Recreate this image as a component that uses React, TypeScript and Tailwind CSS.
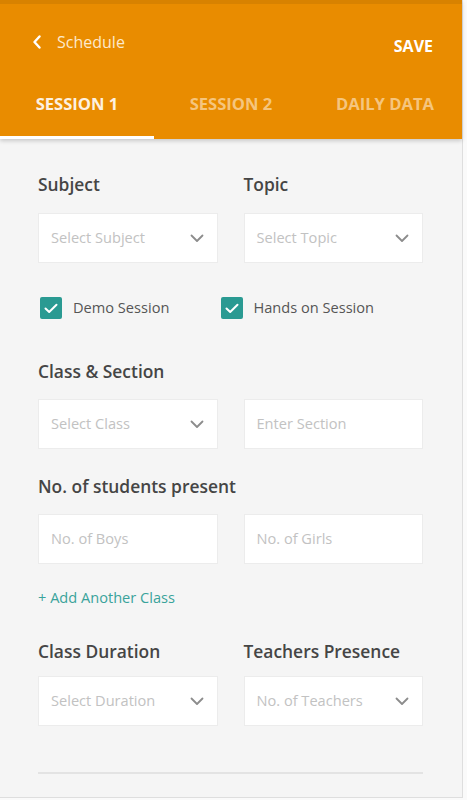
import React from "react";

const Chevron = () => (
  <svg width="14" height="9" viewBox="0 0 14 9" fill="none" className="shrink-0">
    <path d="M1.5 1.5 L7 7 L12.5 1.5" stroke="#8c8c8c" strokeWidth="1.8" strokeLinecap="round" strokeLinejoin="round" />
  </svg>
);

const Select = ({ text }: { text: string }) => (
  <div className="h-[50px] bg-white border border-[#ececec] flex items-center justify-between pl-[12px] pr-[13px]">
    <span className="text-[14.6px] text-[#c2c2c2]">{text}</span>
    <Chevron />
  </div>
);

const Input = ({ text }: { text: string }) => (
  <div className="h-[50px] bg-white border border-[#ececec] flex items-center pl-[12px]">
    <span className="text-[14.6px] text-[#c2c2c2]">{text}</span>
  </div>
);

const Check = ({ label }: { label: string }) => (
  <div className="flex items-center gap-[11px]">
    <div className="w-[22px] h-[22px] rounded-[2px] bg-[#2a9a92] flex items-center justify-center">
      <svg width="14" height="11" viewBox="0 0 14 11" fill="none">
        <path d="M1.5 5.5 L5.2 9 L12.5 1.8" stroke="white" strokeWidth="2" strokeLinecap="round" strokeLinejoin="round" />
      </svg>
    </div>
    <span className="text-[14.6px] text-[#555]">{label}</span>
  </div>
);

const Label = ({ children }: { children: React.ReactNode }) => (
  <div className="text-[17.4px] leading-[24px] font-semibold text-[#454545]">{children}</div>
);

export default function App() {
  return (
    <div className="min-h-[800px] w-[467px] bg-[#fafafa]" style={{ fontFamily: '"Open Sans", "Noto Sans", sans-serif' }}>
      <div className="w-[463px] h-[798px] bg-[#f5f5f5] border-r border-b border-[#dedede] flex flex-col">
        <div className="bg-[#e98c00] border-t-[4px] border-[#d88200] shadow-[0_2px_4px_rgba(0,0,0,0.18)]">
          <div className="h-[76px] flex items-center justify-between pl-[32px] pr-[29px]">
            <div className="flex items-center gap-[15px]">
              <svg width="10" height="14" viewBox="0 0 10 14" fill="none">
                <path d="M7.5 1.5 L2.5 7 L7.5 12.5" stroke="white" strokeWidth="2.4" strokeLinecap="round" strokeLinejoin="round" />
              </svg>
              <span className="text-[16px] text-[#fde9cc]">Schedule</span>
            </div>
            <span className="text-[16px] font-bold text-white mt-[7px]">SAVE</span>
          </div>
          <div className="h-[59px] grid grid-cols-3">
            <div className="border-b-[3px] border-white flex justify-center pt-[13px]">
              <span className="text-[16.6px] leading-[22px] font-bold text-[#fdf1e0]">SESSION 1</span>
            </div>
            <div className="flex justify-center pt-[13px]">
              <span className="text-[16.6px] leading-[22px] font-bold text-[#f5c57e]">SESSION 2</span>
            </div>
            <div className="flex justify-center pt-[13px]">
              <span className="text-[16.6px] leading-[22px] font-bold text-[#f5c57e]">DAILY DATA</span>
            </div>
          </div>
        </div>

        <div className="pl-[38px] pr-[39px] pt-[33px] flex flex-col">
          <div className="grid grid-cols-2 gap-x-[26px] gap-y-[17px]">
            <Label>Subject</Label>
            <Label>Topic</Label>
            <Select text="Select Subject" />
            <Select text="Select Topic" />
          </div>

          <div className="grid grid-cols-2 gap-x-[26px] mt-[34px] pl-[2px]">
            <Check label="Demo Session" />
            <div className="-ml-[24px]">
              <Check label="Hands on Session" />
            </div>
          </div>

          <div className="mt-[40px]">
            <Label>Class &amp; Section</Label>
          </div>
          <div className="grid grid-cols-2 gap-x-[26px] mt-[16px]">
            <Select text="Select Class" />
            <Input text="Enter Section" />
          </div>

          <div className="mt-[25px]">
            <Label>No. of students present</Label>
          </div>
          <div className="grid grid-cols-2 gap-x-[26px] mt-[16px]">
            <Input text="No. of Boys" />
            <Input text="No. of Girls" />
          </div>

          <div className="mt-[22px] text-[14.6px] leading-[22px] text-[#3aa39b]">+ Add Another Class</div>

          <div className="grid grid-cols-2 gap-x-[26px] gap-y-[13px] mt-[31px]">
            <Label>Class Duration</Label>
            <Label>Teachers Presence</Label>
            <Select text="Select Duration" />
            <Select text="No. of Teachers" />
          </div>

          <div className="mt-[46px] h-[2px] bg-[#e3e3e3]" />
        </div>
      </div>
    </div>
  );
}
